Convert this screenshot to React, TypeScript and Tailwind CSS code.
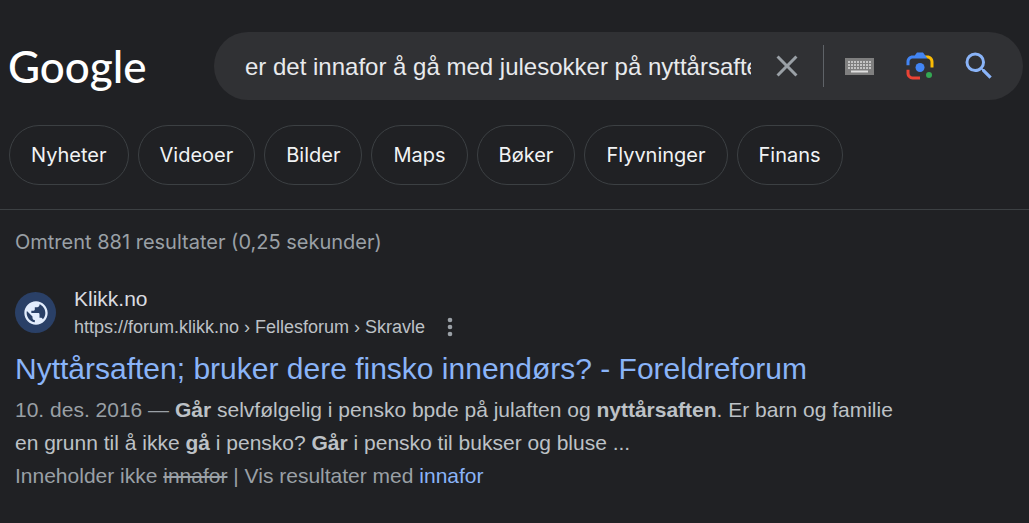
import React from "react";

const filters = ["Nyheter", "Videoer", "Bilder", "Maps", "Bøker", "Flyvninger", "Finans"];

const keyColumns = [3, 6, 9, 12, 15, 18, 21, 24];
const keyRows = [3, 6, 9];

function CloseIcon() {
  return (
    <svg viewBox="0 0 24 24" className="size-9" fill="#9aa0a6" aria-hidden="true">
      <path d="M19 6.41L17.59 5 12 10.59 6.41 5 5 6.41 10.59 12 5 17.59 6.41 19 12 13.41 17.59 19 19 17.59 13.41 12z" />
    </svg>
  );
}

function KeyboardIcon() {
  return (
    <svg viewBox="0 0 29 17" className="h-[17px] w-[29px]" aria-hidden="true">
      <rect width="29" height="17" fill="#7f7f7f" />
      {keyRows.map((y) =>
        keyColumns.map((x) => (
          <rect key={`${x}-${y}`} x={x} y={y} width="2" height="2" fill="#c4c4c4" />
        )),
      )}
      <rect x="6" y="12.5" width="17" height="2" fill="#dedede" />
    </svg>
  );
}

function LensIcon() {
  return (
    <svg viewBox="0 0 192 192" className="size-9" aria-hidden="true">
      <circle fill="#34a853" cx="144.07" cy="144" r="16" />
      <circle fill="#4285f4" cx="96.07" cy="104" r="24" />
      <path fill="#ea4335" d="M24,135.2c0,18.11,14.69,32.8,32.8,32.8H96v-16l-40.1-0.1c-8.8,0-15.9-8.19-15.9-17.9v-18H24V135.2z" />
      <path fill="#fbbc04" d="M168,72.8c0-18.11-14.69-32.8-32.8-32.8H116l20,16c8.8,0,16,8.29,16,18v30h16V72.8z" />
      <path fill="#4285f4" d="M112,24l-32,0L68,40H56.8C38.69,40,24,54.69,24,72.8V92h16V74c0-9.71,7.2-18,16-18h80L112,24z" />
    </svg>
  );
}

function SearchIcon() {
  return (
    <svg viewBox="0 0 24 24" className="size-9" fill="#8ab4f8" aria-hidden="true">
      <path d="M15.5 14h-.79l-.28-.27A6.471 6.471 0 0 0 16 9.5 6.5 6.5 0 1 0 9.5 16c1.61 0 3.09-.59 4.23-1.57l.27.28v.79l5 4.99L20.49 19l-4.99-5zm-6 0C7.01 14 5 11.99 5 9.5S7.01 5 9.5 5 14 7.01 14 9.5 11.99 14 9.5 14z" />
    </svg>
  );
}

function GlobeIcon() {
  return (
    <svg viewBox="0 0 24 24" className="size-7" fill="#e3edfd" aria-hidden="true">
      <path d="M12 2C6.48 2 2 6.48 2 12s4.48 10 10 10 10-4.48 10-10S17.52 2 12 2zM4 12c0-.61.08-1.21.21-1.78L8.99 15v1c0 1.1.9 2 2 2v1.93C7.06 19.43 4 16.07 4 12zm13.89 5.4c-.26-.81-1-1.4-1.9-1.4h-1v-3c0-.55-.45-1-1-1h-6v-2h2c.55 0 1-.45 1-1V7h2c1.1 0 2-.9 2-2v-.41C17.92 5.77 20 8.65 20 12c0 2.08-.81 3.98-2.11 5.4z" />
    </svg>
  );
}

function MoreIcon() {
  return (
    <svg viewBox="0 0 24 24" className="size-7" fill="#9aa0a6" aria-hidden="true">
      <circle cx="12" cy="6" r="2" />
      <circle cx="12" cy="12" r="2" />
      <circle cx="12" cy="18" r="2" />
    </svg>
  );
}

function SearchHeader() {
  return (
    <header className="flex items-center gap-[70px] pl-2 pr-1.5 pt-8">
      <a href="#" className="w-[136px] shrink-0 font-['Lato',sans-serif] text-[44px] font-medium leading-[48px] text-white">
        Google
      </a>
      <form
        role="search"
        className="flex h-[68px] min-w-0 flex-1 items-center rounded-full bg-[#303134] pl-[31px] pr-[26px]"
        onSubmit={(e) => e.preventDefault()}
      >
        <input
          type="text"
          aria-label="Søk"
          defaultValue="er det innafor å gå med julesokker på nyttårsaften"
          className="min-w-0 flex-1 bg-transparent pt-0.5 text-2xl text-[#e8eaed] outline-none"
        />
        <button type="button" aria-label="Tøm" className="ml-[18px]">
          <CloseIcon />
        </button>
        <span className="ml-[18px] h-[42px] w-px bg-[#5f6368]" />
        <button type="button" aria-label="Tastatur" className="ml-[21px]">
          <KeyboardIcon />
        </button>
        <button type="button" aria-label="Bildesøk" className="ml-7">
          <LensIcon />
        </button>
        <button type="submit" aria-label="Google-søk" className="ml-[23px]">
          <SearchIcon />
        </button>
      </form>
    </header>
  );
}

export default function App() {
  return (
    <div className="min-h-screen bg-[#202124] font-['Liberation_Sans',Arial,sans-serif] text-[#bdc1c6]">
      <SearchHeader />
      <nav className="flex flex-wrap gap-[9px] border-b border-[#3c4043] px-[9px] pb-6 pt-[25px]">
        {filters.map((label) => (
          <a
            key={label}
            href="#"
            className="flex h-[60px] items-center rounded-full border border-[#3c4043] px-[21px] font-['Inter',sans-serif] text-xl text-[#f1f3f4]"
          >
            {label}
          </a>
        ))}
      </nav>
      <main className="px-[15px] pt-4">
        <p className="font-['Inter',sans-serif] text-xl leading-8 text-[#9aa0a6]">
          Omtrent 881 resultater (0,25 sekunder)
        </p>
        <article className="pt-[27px]">
          <div className="flex items-start">
            <span className="mt-[7px] flex size-[41px] items-center justify-center rounded-full bg-[#2a4067]">
              <GlobeIcon />
            </span>
            <div className="ml-[18px]">
              <div className="text-[21px] leading-7 text-[#dadce0]">Klikk.no</div>
              <div className="flex h-7 items-center text-lg">
                <cite className="not-italic">https://forum.klikk.no › Fellesforum › Skravle</cite>
                <button type="button" aria-label="Om dette resultatet" className="ml-[11px]">
                  <MoreIcon />
                </button>
              </div>
            </div>
          </div>
          <h3 className="pt-2 text-3xl leading-10 text-[#8ab4f8]">
            <a href="#">Nyttårsaften; bruker dere finsko innendørs? - Foreldreforum</a>
          </h3>
          <p className="max-w-[900px] pt-1 text-[21px] leading-[33px]">
            <span className="text-[#9aa0a6]">10. des. 2016 — </span>
            <b>Går</b> selvfølgelig i pensko bpde på julaften og <b>nyttårsaften</b>. Er barn og familie en grunn til å
            ikke <b>gå</b> i pensko? <b>Går</b> i pensko til bukser og bluse ...
          </p>
          <p className="text-[21px] leading-[33px] text-[#9aa0a6]">
            Inneholder ikke <s>innafor</s> | Vis resultater med{" "}
            <a href="#" className="text-[#8ab4f8]">
              innafor
            </a>
          </p>
        </article>
      </main>
    </div>
  );
}
